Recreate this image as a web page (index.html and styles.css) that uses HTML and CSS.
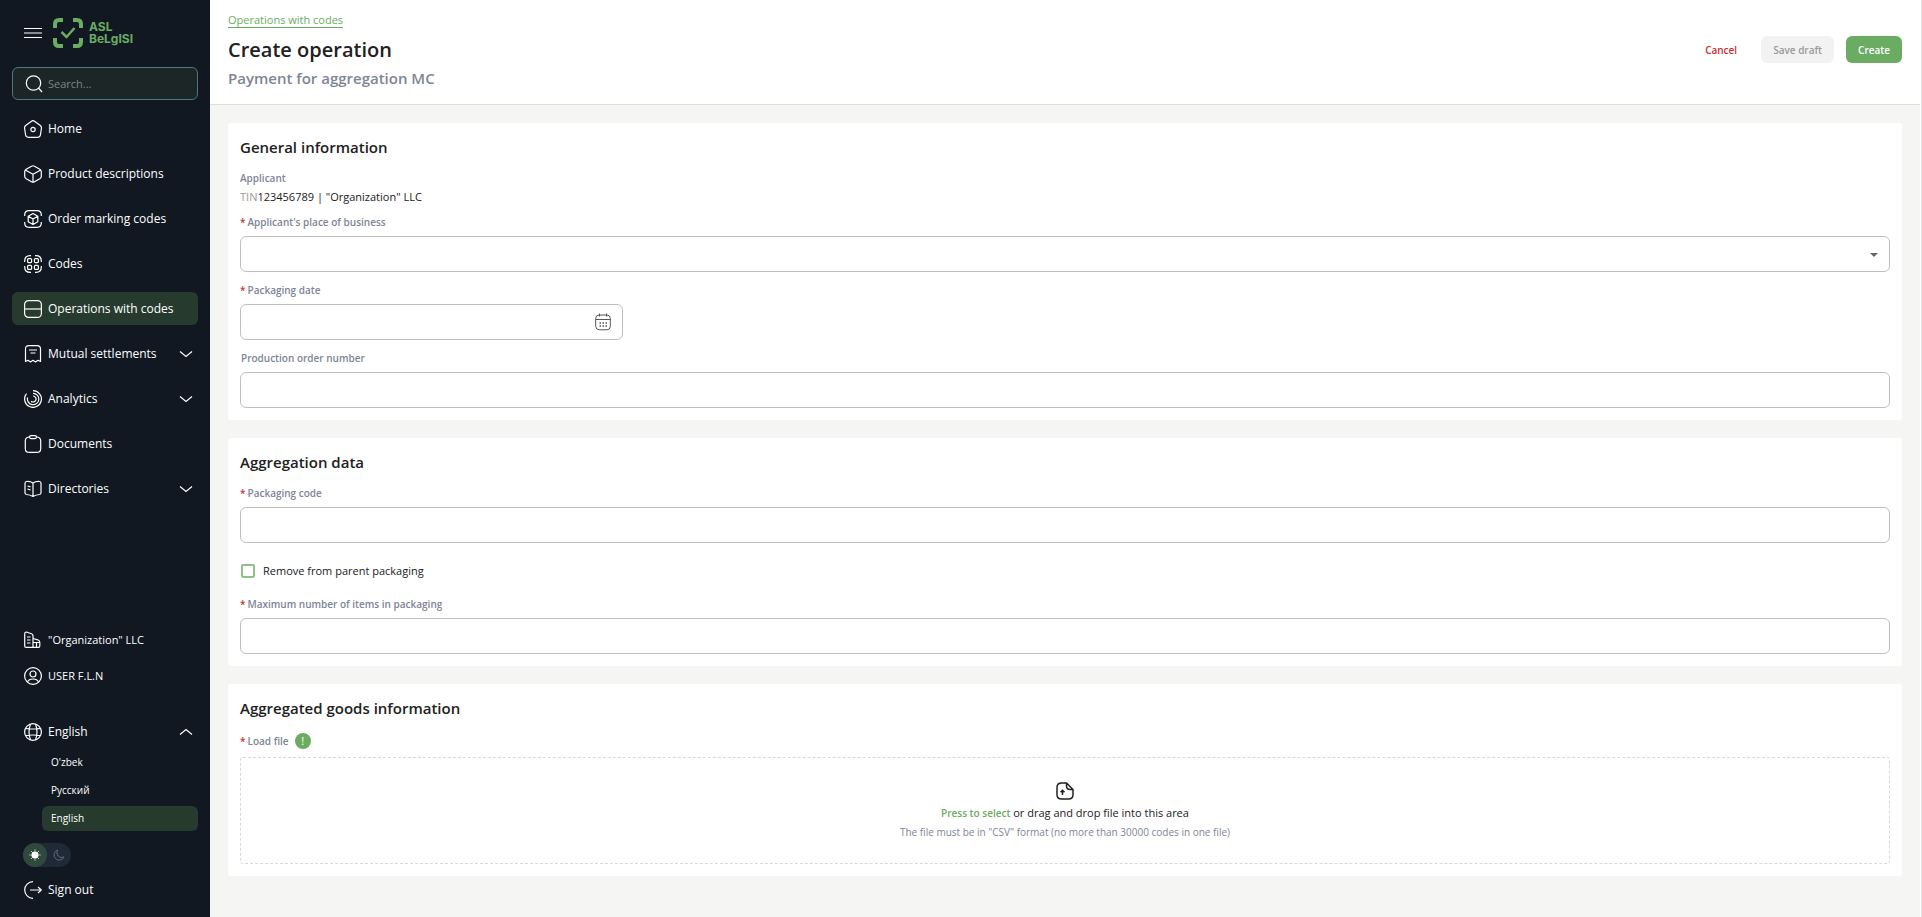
FILE: index.html
```html
<!DOCTYPE html>
<html lang="en">
<head>
    <meta charset="UTF-8">
    <meta name="viewport" content="width=device-width, initial-scale=1.0">
    <title>Create operation</title>
    <link rel="stylesheet" href="styles.css">
</head>
<body>
    <aside class="sidebar">
        <div class="brand">
            <button class="icon-btn" type="button" aria-label="Menu">
                <svg class="icon" viewBox="0 0 18 18"><path d="M0 4.500h18M0 9h18M0 13.500h18"/></svg>
            </button>
            <a class="logo" href="#">
                <svg class="logo-mark" viewBox="0 0 30 30">
                    <path d="M2 10V6q0-4 4-4h4M20 2h4q4 0 4 4v4M28 20v4q0 4-4 4h-4M10 28H6q-4 0-4-4v-4" stroke-width="4"/>
                    <path d="M8.500 14l5 5 8-9" stroke-width="2.500"/>
                </svg>
                <span class="logo-text">ASL<br>BeLgISI</span>
            </a>
        </div>

        <label class="search">
            <svg class="icon" viewBox="0 0 18 18"><circle cx="8.500" cy="8" r="7.200"/><path d="M13.500 13l3.500 4"/></svg>
            <input type="text" placeholder="Search..." aria-label="Search">
        </label>

        <nav class="menu">
            <a class="item" href="#">
                <svg class="icon" viewBox="0 0 18 18"><path d="M7.500 1.200q1.500-1.200 3 0l5.500 4q1.800 1.300 1.400 3.300l-1 6.500q-.4 2.300-2.700 2.300H4.300q-2.300 0-2.700-2.300L.6 8.500Q.2 6.500 2 5.200z"/><circle cx="9" cy="9.500" r="2.200"/></svg>
                <span>Home</span>
            </a>
            <a class="item" href="#">
                <svg class="icon" viewBox="0 0 18 18"><path d="M7.500 1.200q1.500-.9 3 0l5.300 3q1.500.9 1.500 2.500v4.600q0 1.600-1.500 2.500l-5.300 3q-1.500.9-3 0l-5.300-3q-1.500-.9-1.500-2.500V6.700q0-1.600 1.500-2.500zM1.200 5L9 9.200 16.800 5M9 9.200v8"/></svg>
                <span>Product descriptions</span>
            </a>
            <a class="item" href="#">
                <svg class="icon" viewBox="0 0 18 18"><path d="M.7 6V5q0-4.300 4.300-4.300h8q4.300 0 4.300 4.300v1M.7 12v1q0 4.300 4.300 4.300h8q4.300 0 4.300-4.300v-1"/><path d="M9 3.500l4.800 2.700v5.600L9 14.500l-4.800-2.700V6.200zM4.200 6.200L9 9l4.800-2.800M9 9v5.500"/></svg>
                <span>Order marking codes</span>
            </a>
            <a class="item" href="#">
                <svg class="icon" viewBox="0 0 18 18"><path d="M.7 7V6Q.7.7 6 .7h1M11 .7h1q5.300 0 5.300 5.300v1M17.300 11v1q0 5.300-5.300 5.300h-1M7 17.300H6Q.7 17.300.7 12v-1"/><rect x="3.600" y="3.600" width="4" height="4" rx="1"/><rect x="10.400" y="3.600" width="4" height="4" rx="1"/><rect x="3.600" y="10.400" width="4" height="4" rx="1"/><rect x="10.400" y="10.400" width="4" height="4" rx="1"/></svg>
                <span>Codes</span>
            </a>
            <a class="item active" href="#">
                <svg class="icon" viewBox="0 0 18 18"><rect x=".6" y=".6" width="16.800" height="16.800" rx="4"/><path d="M0 9h18"/></svg>
                <span>Operations with codes</span>
            </a>
            <a class="item" href="#">
                <svg class="icon" viewBox="0 0 18 18"><path d="M1.500 16.500V4q0-3.400 3.400-3.400h8.200q3.400 0 3.400 3.400v12.500L14 15.300 11.500 17 9 15.300 6.500 17 4 15.300zM5 5h8M6.500 8h5"/></svg>
                <span>Mutual settlements</span>
                <svg class="chevron" viewBox="0 0 12 6"><path d="M0 .5l6 5 6-5"/></svg>
            </a>
            <a class="item" href="#">
                <svg class="icon" viewBox="0 0 18 18"><path d="M9 .6A8.400 8.400 0 1 1 2.500 3.700M9 3.300A5.700 5.700 0 1 1 3.600 7.500M9 6A3 3 0 1 1 7 11.200"/></svg>
                <span>Analytics</span>
                <svg class="chevron" viewBox="0 0 12 6"><path d="M0 .5l6 5 6-5"/></svg>
            </a>
            <a class="item" href="#">
                <svg class="icon" viewBox="0 0 18 18"><path d="M5.500 2q-4.200 0-4.200 4v7.400q0 4 4 4h7.400q4 0 4-4V6q0-4-4.200-4"/><rect x="5.500" y=".6" width="7" height="3" rx="1.500"/></svg>
                <span>Documents</span>
            </a>
            <a class="item" href="#">
                <svg class="icon" viewBox="0 0 18 18"><path d="M9 3Q6 1 2.500 1.500q-1.500.2-1.500 1.700v9.600q0 1.500 1.500 1.700 3.500.2 6.500 2 3-1.800 6.500-2 1.500-.2 1.500-1.700V3.200q0-1.500-1.500-1.700Q12 1 9 3zM9 3v13M3.500 6l3 .8M3.500 9l3 .8"/></svg>
                <span>Directories</span>
                <svg class="chevron" viewBox="0 0 12 6"><path d="M0 .5l6 5 6-5"/></svg>
            </a>
        </nav>

        <div class="account">
            <a class="item" href="#">
                <svg class="icon" viewBox="0 0 18 18"><path d="M.7 15V3Q.7.700 3 1.200l4.500 1.500q1.500.5 1.500 2V16.300H2Q.7 16.300.7 15zM9 7.500l4.800 1.300q2 .7 2 2.500v3.700q0 1.300-1.300 1.300H9M3 6h3.500M3 9h3.500M3 12h3.500M9 11.500h6.800M12.500 11.500v4.500"/></svg>
                <span>"Organization" LLC</span>
            </a>
            <a class="item" href="#">
                <svg class="icon" viewBox="0 0 18 18"><circle cx="9" cy="9" r="8.400"/><circle cx="9" cy="7" r="3"/><path d="M3.500 15q1.200-3 5.500-3t5.500 3"/></svg>
                <span>USER F.L.N</span>
            </a>
        </div>

        <div class="language">
            <button class="item" type="button">
                <svg class="icon" viewBox="0 0 18 18"><circle cx="9" cy="9" r="8.400"/><path d="M6.500 1Q3.500 9 6.500 17M11.500 1q3 8 0 16M1.500 5.500q7.500 1 15 0M1.500 12.500q7.500-1 15 0"/></svg>
                <span>English</span>
                <svg class="chevron" viewBox="0 0 12 6"><path d="M0 5.500l6-5 6 5"/></svg>
            </button>
            <ul class="lang-list">
                <li><a href="#">O'zbek</a></li>
                <li><a href="#">Русский</a></li>
                <li><a class="active" href="#">English</a></li>
            </ul>
        </div>

        <button class="theme" type="button" aria-label="Theme">
            <span class="theme-on">
                <svg viewBox="0 0 12 12"><circle cx="6" cy="6" r="3.500" fill="#fff"/><path d="M6 .5v11M.5 6h11M2 2l8 8M10 2l-8 8" stroke="#fff" stroke-dasharray="1 1"/></svg>
            </span>
            <span class="theme-off">
                <svg viewBox="0 0 12 12"><path d="M4.500 1A5.200 5.200 0 1 0 11 8 5 5 0 0 1 4.500 1z" fill="none" stroke="#5d6980"/></svg>
            </span>
        </button>
        <a class="item signout" href="#">
            <svg class="icon" viewBox="0 0 18 18"><path d="M9 .7a8.300 8.300 0 0 0 0 16.600M6 9h11.500M14 6l3.300 3-3.300 3"/></svg>
            <span>Sign out</span>
        </a>
    </aside>

    <main class="main">
        <header class="header">
            <div>
                <a class="breadcrumb" href="#">Operations with codes</a>
                <h1>Create operation</h1>
                <p class="subtitle">Payment for aggregation MC</p>
            </div>
            <div class="actions">
                <button class="btn cancel" type="button">Cancel</button>
                <button class="btn draft" type="button" disabled>Save draft</button>
                <button class="btn create" type="submit" form="operation">Create</button>
            </div>
        </header>

        <form class="content" id="operation">
            <section class="card">
                <h2>General information</h2>
                <div class="label">Applicant</div>
                <p class="value"><span class="tin">TIN</span>123456789 | "Organization" LLC</p>
                <div class="field">
                    <label class="label required" for="place">Applicant's place of business</label>
                    <div class="input-group">
                        <select class="input" id="place"><option></option></select>
                        <svg class="caret" viewBox="0 0 8 4"><path d="M0 0h8L4 4z"/></svg>
                    </div>
                </div>
                <div class="field date">
                    <label class="label required" for="date">Packaging date</label>
                    <div class="input-group">
                        <input class="input" type="text" id="date">
                        <svg class="calendar" viewBox="0 0 16 18"><path d="M.7 5.500q0-3.500 3.500-3.500h7.600q3.500 0 3.500 3.500v7.800q0 3.500-3.500 3.500H4.200q-3.500 0-3.500-3.500zM.7 6.500h14.600M4.500.500v3M11.500.500v3"/><path d="M4.500 10h7.500M4.500 13h7.500" stroke-dasharray="1.500 1.500" stroke-width="1.500"/></svg>
                    </div>
                </div>
                <div class="field">
                    <label class="label optional" for="order">Production order number</label>
                    <input class="input" type="text" id="order">
                </div>
            </section>

            <section class="card">
                <h2>Aggregation data</h2>
                <div class="field">
                    <label class="label required" for="code">Packaging code</label>
                    <input class="input" type="text" id="code">
                </div>
                <label class="check"><input type="checkbox"> Remove from parent packaging</label>
                <div class="field">
                    <label class="label required" for="max">Maximum number of items in packaging</label>
                    <input class="input" type="text" id="max">
                </div>
            </section>

            <section class="card">
                <h2>Aggregated goods information</h2>
                <div class="file-label">
                    <label class="label required" for="file">Load file</label>
                    <span class="hint">!</span>
                </div>
                <label class="dropzone">
                    <input type="file" id="file">
                    <svg class="upload" viewBox="0 0 18 18"><path d="M10.500 1H5.500Q1 1 1 5.500v7Q1 17 5.500 17h7q4.500 0 4.500-4.500V7.500zM10.500 1v3q0 3.500 3.500 3.500h3M6.500 13V8.500M4.500 10.300l2-2 2 2"/></svg>
                    <span class="drop-text"><b>Press to select</b> or drag and drop file into this area</span>
                    <span class="drop-note">The file must be in "CSV" format (no more than 30000 codes in one file)</span>
                </label>
            </section>
        </form>
    </main>
</body>
</html>
```
FILE: styles.css
```css
* {
    box-sizing: border-box;
}

body {
    margin: 0;
    min-height: 100vh;
    display: flex;
    border-right: 1px solid #e3e3e3;
    font-family: "Open Sans", "Noto Sans", sans-serif;
    font-size: 11px;
    color: #212121;
    background: #f5f5f4;
}

h1, h2, p, ul {
    margin: 0;
    padding: 0;
}

a {
    color: inherit;
    text-decoration: none;
}

button, input, select {
    font-family: inherit;
    font-size: inherit;
}

/* Sidebar */
.sidebar {
    width: 210px;
    flex-shrink: 0;
    min-height: 100vh;
    padding: 0 12px 11px;
    display: flex;
    flex-direction: column;
    background: #111822;
    color: #fff;
    font-size: 12px;
}

.brand {
    display: flex;
    align-items: center;
    gap: 11px;
    height: 67px;
    padding: 0 0 1px 12px;
}

.icon-btn {
    display: flex;
    padding: 0;
    border: none;
    background: none;
    cursor: pointer;
}

.logo {
    display: flex;
    align-items: center;
    gap: 6px;
    color: #6aac62;
}

.logo-mark {
    width: 30px;
    height: 30px;
    fill: none;
    stroke: #6aac62;
}

.logo-text {
    font-family: Inter, sans-serif;
    font-size: 12px;
    font-weight: 700;
    line-height: 12px;
}

.icon {
    width: 18px;
    height: 18px;
    flex-shrink: 0;
    fill: none;
    stroke: #fff;
    stroke-width: 1.2;
    stroke-linejoin: round;
}

.search {
    display: flex;
    align-items: center;
    gap: 5px;
    height: 33px;
    padding: 0 12px;
    border: 1px solid #4d7880;
    border-radius: 6px;
    background: #1c2627;
}

.search input {
    width: 100%;
    min-width: 0;
    padding: 0;
    border: none;
    outline: none;
    background: none;
    color: #fff;
    font-size: 11px;
}

.search input::placeholder {
    color: #7c8583;
}

.menu {
    display: flex;
    flex-direction: column;
    gap: 12px;
    margin: 12px 0 auto;
}

.item {
    display: flex;
    align-items: center;
    gap: 6px;
    width: 100%;
    height: 33px;
    padding: 0 6px 0 12px;
    border: none;
    border-radius: 6px;
    background: none;
    color: #fff;
}

.item.active,
.lang-list .active {
    background: #263b2e;
}

.chevron {
    width: 12px;
    height: 6px;
    margin-left: auto;
    fill: none;
    stroke: #fff;
    stroke-width: 1.2;
    overflow: visible;
}

.account {
    display: flex;
    flex-direction: column;
    gap: 3px;
    margin-bottom: 23px;
    font-size: 11px;
}

.lang-list {
    display: flex;
    flex-direction: column;
    gap: 3px;
    padding: 2px 0 12px 30px;
    list-style: none;
    font-size: 10px;
}

.lang-list a {
    display: block;
    padding: 0 9px;
    border-radius: 6px;
    line-height: 25px;
}

.theme {
    display: flex;
    width: 48px;
    height: 24px;
    margin: 0 0 6px 11px;
    padding: 0;
    border: none;
    border-radius: 12px;
    background: #1f2a36;
    cursor: pointer;
}

.theme span {
    display: flex;
    align-items: center;
    justify-content: center;
    width: 24px;
    height: 24px;
    border-radius: 50%;
}

.theme-on {
    background: #2f4a3c;
}

.theme svg {
    width: 12px;
    height: 12px;
}

/* Page header */
.main {
    flex: 1;
    min-width: 0;
    border-right: 1px solid #fff;
}

.header {
    display: flex;
    justify-content: space-between;
    align-items: flex-start;
    height: 105px;
    padding: 12px 18px 0;
    border-bottom: 1px solid #dcdfde;
    background: #fff;
}

.breadcrumb {
    display: inline-block;
    border-bottom: 1px solid #6aac62;
    color: #6aac62;
    line-height: 15px;
}

h1 {
    margin: 8px 0 4px;
    font-size: 20px;
    font-weight: 600;
    line-height: 28px;
}

.subtitle {
    color: #7d8597;
    font-size: 15px;
    font-weight: 600;
    line-height: 20px;
}

.actions {
    display: flex;
    gap: 12px;
    margin-top: 24px;
}

.btn {
    height: 27px;
    padding: 0 12px;
    border: none;
    border-radius: 6px;
    background: none;
    font-size: 10px;
    font-weight: 600;
    cursor: pointer;
}

.cancel {
    color: #cf2e2e;
}

.draft {
    background: #f2f2f2;
    color: #999;
}

.create {
    background: #6aac62;
    color: #fff;
}

/* Form */
.content {
    display: flex;
    flex-direction: column;
    gap: 18px;
    padding: 18px;
}

.card {
    padding: 12px;
    border-radius: 3px;
    background: #fff;
}

h2 {
    margin-bottom: 8px;
    font-size: 15px;
    font-weight: 600;
    line-height: 25px;
}

.label {
    display: block;
    margin-bottom: 4px;
    color: #7d8597;
    font-size: 10px;
    font-weight: 600;
    line-height: 20px;
}

div.label {
    margin-bottom: 0;
}

.required::before {
    content: "*";
    margin-right: 2px;
    color: #cf2e2e;
}

.optional {
    padding-left: 1px;
}

.value {
    margin-bottom: 6px;
    line-height: 18px;
}

.tin {
    color: #999;
}

.field + .field {
    margin-top: 8px;
}

.input {
    display: block;
    width: 100%;
    height: 36px;
    padding: 0 12px;
    border: 1px solid #bfbfbf;
    border-radius: 6px;
    background: #fff;
    outline: none;
}

select.input {
    appearance: none;
}

.date {
    width: 383px;
}

.input-group {
    position: relative;
}

.caret {
    position: absolute;
    right: 12px;
    top: 17px;
    width: 8px;
    height: 4px;
    fill: #666;
    pointer-events: none;
}

.calendar {
    position: absolute;
    right: 12px;
    top: 9px;
    width: 16px;
    height: 18px;
    fill: none;
    stroke: #555;
}

.check {
    display: flex;
    align-items: center;
    gap: 8px;
    margin: 8px 0 0;
    padding: 10px 1px 5px;
    line-height: 20px;
}

.check input {
    appearance: none;
    width: 14px;
    height: 14px;
    margin: 0;
    border: 2px solid #8fc088;
    border-radius: 2px;
}

.check + .field {
    margin-top: 8px;
}

.file-label {
    display: flex;
    align-items: center;
    gap: 6px;
    height: 24px;
    margin-bottom: 4px;
}

.file-label .label {
    margin-bottom: 0;
}

.hint {
    width: 16px;
    height: 16px;
    border-radius: 50%;
    background: #6aac62;
    color: #fff;
    font-size: 11px;
    line-height: 16px;
    text-align: center;
}

.dropzone {
    display: flex;
    flex-direction: column;
    align-items: center;
    height: 107px;
    padding-top: 24px;
    border: 1px dashed #d9d9d9;
    border-radius: 3px;
    cursor: pointer;
}

.dropzone input {
    display: none;
}

.upload {
    width: 18px;
    height: 18px;
    fill: none;
    stroke: #212121;
    stroke-width: 1.5;
}

.drop-text {
    margin-top: 3px;
    line-height: 20px;
}

.drop-text b {
    color: #6aac62;
    font-size: 10px;
    font-weight: 600;
}

.drop-note {
    color: #7d8597;
    font-size: 10px;
    line-height: 18px;
}
```
